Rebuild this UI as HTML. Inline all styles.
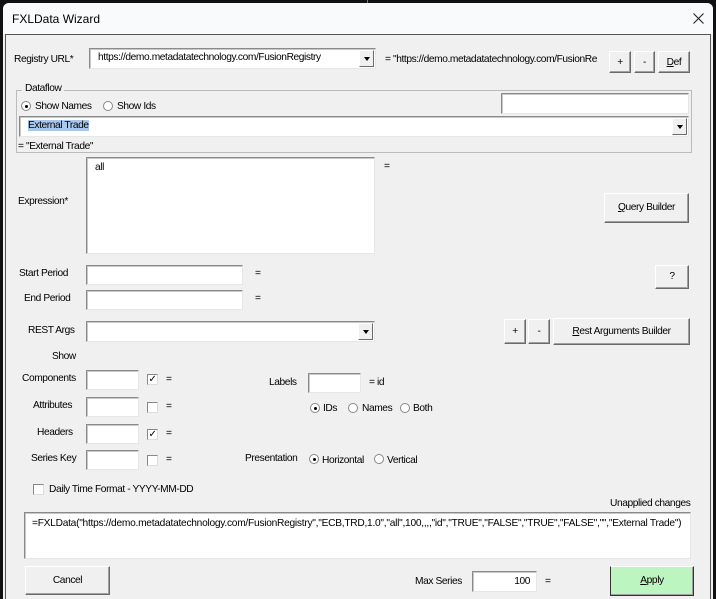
<!DOCTYPE html>
<html><head><meta charset="utf-8"><style>
*{box-sizing:border-box;margin:0;padding:0}
body{width:716px;height:599px;background:#111;position:relative;overflow:hidden;font-family:"Liberation Sans",sans-serif;font-size:10.2px;color:#000;letter-spacing:-0.4px}
.win{position:absolute;left:3px;top:3px;width:710px;height:596px;background:#f0f0f0;border-radius:6px 6px 0 0;overflow:hidden}
.title{position:absolute;left:0;top:0;width:710px;height:31px;background:#f9fafb;font-size:12px;letter-spacing:0}
.body{position:absolute;left:2px;top:31px;width:706px;height:565px;border:1px solid #555;border-bottom:none;background:#f0f0f0}
.a{position:absolute;white-space:nowrap}
.in{position:absolute;background:#fff;border:1px solid;border-color:#8a8a8a #e6e6e6 #e6e6e6 #8a8a8a;box-shadow:inset 1px 1px 0 #c8c8c8}
.btn{position:absolute;background:#f0f0f0;border:1px solid;border-color:#fff #6a6a6a #6a6a6a #fff;box-shadow:inset -1px -1px 0 #a0a0a0;text-align:center}
.dd{position:absolute;right:1px;top:1px;bottom:1px;width:15px;background:#f0f0f0;border:1px solid;border-color:#fff #6a6a6a #6a6a6a #fff}
.dd:after{content:"";position:absolute;left:4px;top:6px;border:3px solid transparent;border-top:4px solid #000}
.rb{position:absolute;width:10px;height:10px;border-radius:50%;background:#fff;border:1px solid #888}
.rb.on:after{content:"";position:absolute;left:2.5px;top:2.5px;width:3px;height:3px;border-radius:50%;background:#000}
.cb{position:absolute;width:11px;height:11px;background:#fff;border:1px solid;border-color:#888 #ddd #ddd #888;font-size:10px;line-height:9px;text-align:center}
</style></head><body>
<div style="position:absolute;left:367px;top:0;width:1px;height:6px;background:#5b7fb3"></div>
<div class="win">
<div class="title"><span class="a" style="left:9px;top:9px">FXLData Wizard</span><svg class="a" style="left:690px;top:10px" width="11" height="11"><path d="M0.5 0.5L10.5 10.5M10.5 0.5L0.5 10.5" stroke="#222" stroke-width="1.1"/></svg></div>
<div class="body">
<span class="a" style="left:8px;top:19px">Registry URL*</span>
<div class="in" style="left:83px;top:13px;width:287px;height:21px"><span class="a" style="left:8px;top:3px">https://demo.metadatatechnology.com/FusionRegistry</span><div class="dd"></div></div>
<span class="a" style="left:379px;top:19px;width:219px;overflow:hidden">= "https://demo.metadatatechnology.com/FusionRe</span>
<div class="btn" style="left:603px;top:16px;width:22px;height:22px;line-height:22px">+</div>
<div class="btn" style="left:628px;top:16px;width:21px;height:22px;line-height:22px">-</div>
<div class="btn" style="left:652px;top:16px;width:32px;height:22px;line-height:22px"><u>D</u>ef</div>
<div style="position:absolute;left:10px;top:55px;width:676px;height:63px;border:1px solid #bbb"></div>
<span class="a" style="left:16px;top:48px;background:#f0f0f0;padding:0 3px">Dataflow</span>
<div class="rb on" style="left:15px;top:66px"></div><span class="a" style="left:29px;top:66px">Show Names</span>
<div class="rb" style="left:97px;top:66px"></div><span class="a" style="left:111px;top:66px">Show Ids</span>
<div class="in" style="left:495px;top:58px;width:188px;height:21px"></div>
<div class="in" style="left:13px;top:81px;width:670px;height:21px"><span class="a" style="left:8px;top:3px;background:#a8c8ee">External Trade</span><div class="dd"></div></div>
<span class="a" style="left:12px;top:106px">= "External Trade"</span>
<span class="a" style="left:12px;top:161px">Expression*</span>
<div class="in" style="left:80px;top:122px;width:289px;height:97px"><span class="a" style="left:8px;top:4px">all</span></div>
<span class="a" style="left:378px;top:126px">=</span>
<div class="btn" style="left:598px;top:158px;width:85px;height:30px;line-height:28px"><u>Q</u>uery Builder</div>
<span class="a" style="left:13px;top:233px">Start Period</span>
<div class="in" style="left:80px;top:230px;width:157px;height:20px"></div>
<span class="a" style="left:249px;top:233px">=</span>
<span class="a" style="left:18px;top:258px">End Period</span>
<div class="in" style="left:80px;top:255px;width:157px;height:20px"></div>
<span class="a" style="left:249px;top:258px">=</span>
<div class="btn" style="left:649px;top:230px;width:34px;height:24px;line-height:22px">?</div>
<span class="a" style="left:22px;top:290px">REST Args</span>
<div class="in" style="left:80px;top:286px;width:289px;height:21px"><div class="dd"></div></div>
<div class="btn" style="left:498px;top:284px;width:22px;height:25px;line-height:23px">+</div>
<div class="btn" style="left:522px;top:284px;width:22px;height:25px;line-height:23px">-</div>
<div class="btn" style="left:547px;top:283px;width:137px;height:27px;line-height:25px"><u>R</u>est Arguments Builder</div>
<span class="a" style="left:46px;top:316px">Show</span>
<span class="a" style="left:16px;top:338px">Components</span>
<div class="in" style="left:80px;top:335px;width:53px;height:20px"></div>
<div class="cb" style="left:141px;top:339px">✓</div><span class="a" style="left:160px;top:339px">=</span>
<span class="a" style="left:27px;top:365px">Attributes</span>
<div class="in" style="left:80px;top:362px;width:53px;height:20px"></div>
<div class="cb" style="left:141px;top:367px"></div><span class="a" style="left:160px;top:366px">=</span>
<span class="a" style="left:31px;top:392px">Headers</span>
<div class="in" style="left:80px;top:389px;width:53px;height:20px"></div>
<div class="cb" style="left:141px;top:394px">✓</div><span class="a" style="left:160px;top:393px">=</span>
<span class="a" style="left:25px;top:418px">Series Key</span>
<div class="in" style="left:80px;top:415px;width:53px;height:20px"></div>
<div class="cb" style="left:141px;top:420px"></div><span class="a" style="left:160px;top:419px">=</span>
<span class="a" style="left:263px;top:342px">Labels</span>
<div class="in" style="left:302px;top:338px;width:53px;height:20px"></div>
<span class="a" style="left:363px;top:342px">= id</span>
<div class="rb on" style="left:304px;top:368px"></div><span class="a" style="left:317px;top:368px">IDs</span>
<div class="rb" style="left:342px;top:368px"></div><span class="a" style="left:356px;top:368px">Names</span>
<div class="rb" style="left:394px;top:368px"></div><span class="a" style="left:407px;top:368px">Both</span>
<span class="a" style="left:239px;top:418px">Presentation</span>
<div class="rb on" style="left:303px;top:419px"></div><span class="a" style="left:316px;top:420px">Horizontal</span>
<div class="rb" style="left:368px;top:419px"></div><span class="a" style="left:381px;top:420px">Vertical</span>
<div class="cb" style="left:27px;top:449px"></div><span class="a" style="left:43px;top:449px">Daily Time Format - YYYY-MM-DD</span>
<span class="a" style="left:604px;top:463px">Unapplied changes</span>
<div class="in" style="left:18px;top:477px;width:667px;height:47px"><span class="a" style="left:7px;top:5px;letter-spacing:-0.26px">=FXLData("https://demo.metadatatechnology.com/FusionRegistry","ECB,TRD,1.0","all",100,,,,"id","TRUE","FALSE","TRUE","FALSE","","External Trade")</span></div>
<div class="btn" style="left:19px;top:531px;width:85px;height:29px;line-height:27px">Cancel</div>
<span class="a" style="left:409px;top:541px">Max Series</span>
<div class="in" style="left:466px;top:536px;width:65px;height:21px"><span class="a" style="right:6px;top:4px">100</span></div>
<span class="a" style="left:539px;top:541px">=</span>
<div class="btn" style="left:604px;top:531px;width:84px;height:30px;line-height:28px;background:#bdf5c0;border-color:#fff #333 #333 #333"><u>A</u>pply</div>
</div>
</div>
</body></html>
